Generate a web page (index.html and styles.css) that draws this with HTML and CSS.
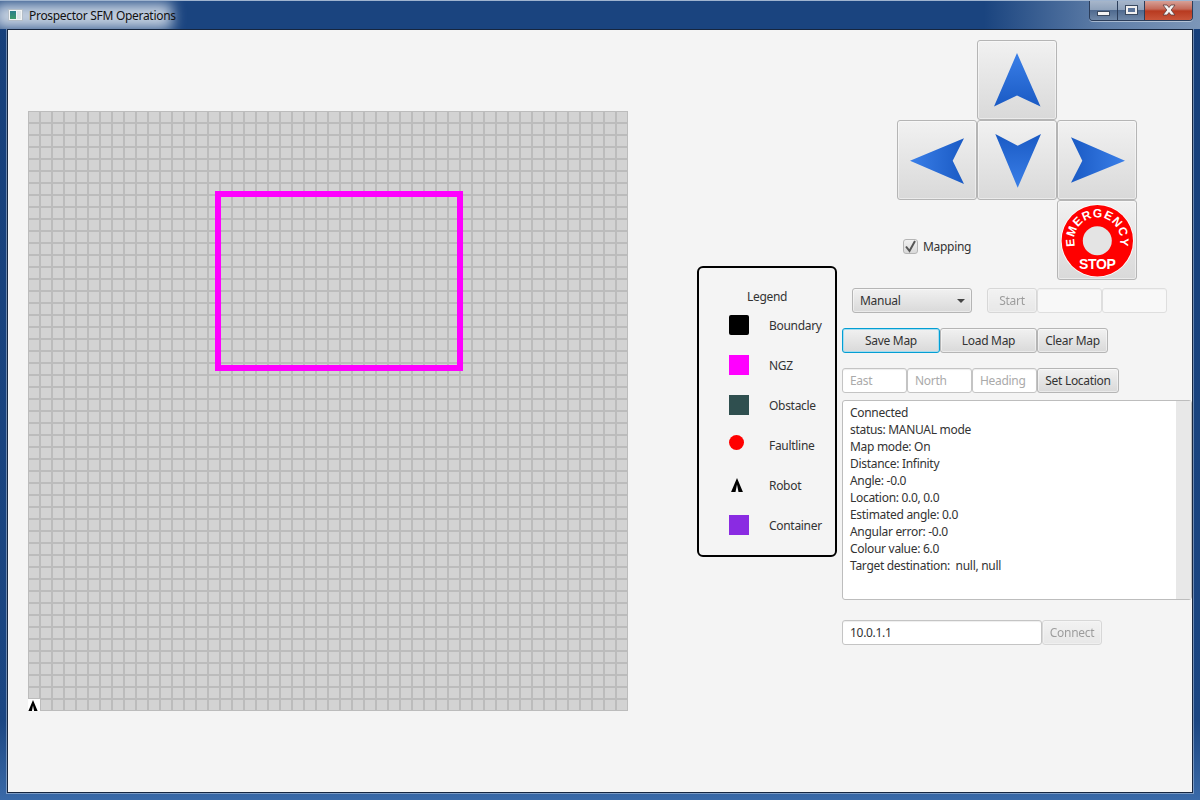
FILE: index.html
```html
<!DOCTYPE html>
<html>
<head>
  <meta charset="UTF-8">
  <title>Prospector SFM Operations</title>
  <link rel="stylesheet" href="styles.css">
</head>
<body>
  <div class="window">
    <div class="titlebar">
      <div class="title-glow"></div>
      <span class="app-icon"><i class="app-icon-green"></i><i class="app-icon-grey"></i></span>
      <span class="title-text">Prospector SFM Operations</span>
      <div class="win-controls">
        <div class="win-btn win-min"><i></i></div>
        <div class="win-btn win-max"><i></i></div>
        <div class="win-btn win-close">
          <svg width="14" height="12" viewBox="0 0 14 12"><path d="M1 1h4l2 2.500L9 1h4L9.200 6 13 11H9L7 8.500 5 11H1l3.800-5z" fill="#f4f4f4" stroke="#5a3a3a" stroke-width=".8"/></svg>
        </div>
      </div>
    </div>

    <div class="content">
      <!-- map -->
      <div class="map">
        <div class="ngz-rect"></div>
        <div class="robot">
          <svg width="10" height="12" viewBox="0 0 11 13"><path d="M5.500 0L11 13H6.900L5.500 6 4.100 13H0z" fill="#000"/></svg>
        </div>
      </div>

      <!-- legend -->
      <div class="legend">
        <div class="legend-title">Legend</div>
        <div class="legend-row"><span class="swatch swatch-boundary"></span><span>Boundary</span></div>
        <div class="legend-row"><span class="swatch swatch-ngz"></span><span>NGZ</span></div>
        <div class="legend-row"><span class="swatch swatch-obstacle"></span><span>Obstacle</span></div>
        <div class="legend-row"><span class="swatch"><i class="swatch-fault"></i></span><span>Faultline</span></div>
        <div class="legend-row">
          <span class="swatch swatch-robot">
            <svg width="12" height="14" viewBox="0 0 11 13"><path d="M5.500 0L11 13H6.900L5.500 6 4.100 13H0z" fill="#000"/></svg>
          </span>
          <span>Robot</span>
        </div>
        <div class="legend-row"><span class="swatch swatch-container"></span><span>Container</span></div>
      </div>

      <!-- controls -->
      <div class="controls">
        <div class="dpad">
          <div></div>
          <button class="btn pad-btn">
            <svg width="80" height="80" viewBox="0 0 80 80">
              <defs><linearGradient id="gUp" x1="0" y1="0" x2="0" y2="1"><stop offset="0" stop-color="#3a7fe8"/><stop offset="1" stop-color="#1a5ac4"/></linearGradient></defs>
              <polygon points="40,13 63.500,66.500 40,55.500 17,66.500" fill="url(#gUp)"/>
            </svg>
          </button>
          <div></div>
          <button class="btn pad-btn">
            <svg width="80" height="80" viewBox="0 0 80 80">
              <defs><linearGradient id="gLeft" x1="0" y1="0" x2="1" y2="0"><stop offset="0" stop-color="#3a7fe8"/><stop offset="1" stop-color="#1a5ac4"/></linearGradient></defs>
              <polygon points="13,40.700 67,18.300 55.700,40.700 67,64" fill="url(#gLeft)"/>
            </svg>
          </button>
          <button class="btn pad-btn">
            <svg width="80" height="80" viewBox="0 0 80 80">
              <defs><linearGradient id="gDown" x1="0" y1="1" x2="0" y2="0"><stop offset="0" stop-color="#3a7fe8"/><stop offset="1" stop-color="#1a5ac4"/></linearGradient></defs>
              <polygon points="40.700,67.700 18.300,14 40.700,25.700 64,14" fill="url(#gDown)"/>
            </svg>
          </button>
          <button class="btn pad-btn">
            <svg width="80" height="80" viewBox="0 0 80 80">
              <defs><linearGradient id="gRight" x1="1" y1="0" x2="0" y2="0"><stop offset="0" stop-color="#3a7fe8"/><stop offset="1" stop-color="#1a5ac4"/></linearGradient></defs>
              <polygon points="68,40.700 14,17.300 25.300,40.700 14,62.700" fill="url(#gRight)"/>
            </svg>
          </button>
          <label class="check-row">
            <span class="checkbox">
              <svg width="13" height="13" viewBox="0 0 13 13"><path d="M2 6.500L5.500 11 11 1" fill="none" stroke="#555" stroke-width="2"/></svg>
            </span>
            Mapping
          </label>
          <div></div>
          <button class="btn pad-btn">
            <svg class="estop" width="80" height="80" viewBox="0 0 80 80">
              <defs><path id="estopArc" d="M18.300 47A23 23 0 1 1 62.300 47"/></defs>
              <circle cx="40.300" cy="40.700" r="36.500" fill="#fff"/>
              <circle cx="40.300" cy="40.700" r="35.700" fill="#ff0000"/>
              <circle cx="40.300" cy="40.700" r="14.500" fill="#e4e4e4"/>
              <text class="estop-text" font-size="12" letter-spacing=".8"><textPath href="#estopArc" startOffset="50%" text-anchor="middle">EMERGENCY</textPath></text>
              <text class="estop-text" x="40.300" y="69" font-size="14" text-anchor="middle">STOP</text>
            </svg>
          </button>
        </div>

        <div class="row row-mode">
          <button class="btn mode-select"><span>Manual</span><i class="caret"></i></button>
          <button class="btn start-btn is-disabled">Start</button>
          <input class="field field-wide is-disabled" type="text">
          <input class="field field-wide is-disabled" type="text">
        </div>

        <div class="row row-map">
          <button class="btn save-btn">Save Map</button>
          <button class="btn load-btn">Load Map</button>
          <button class="btn clear-btn">Clear Map</button>
        </div>

        <div class="row row-loc">
          <input class="field field-loc" type="text" placeholder="East">
          <input class="field field-loc" type="text" placeholder="North">
          <input class="field field-loc" type="text" placeholder="Heading">
          <button class="btn setloc-btn">Set Location</button>
        </div>

        <div class="log">
          <div class="log-text">Connected
status: MANUAL mode
Map mode: On
Distance: Infinity
Angle: -0.0
Location: 0.0, 0.0
Estimated angle: 0.0
Angular error: -0.0
Colour value: 6.0
Target destination:  null, null</div>
          <div class="log-scroll"></div>
        </div>

        <div class="row row-connect">
          <input class="field field-ip" type="text" value="10.0.1.1">
          <button class="btn connect-btn is-disabled">Connect</button>
        </div>
      </div>
    </div>
  </div>
</body>
</html>
```

FILE: styles.css
```css
/* page and window frame */
html, body {
  margin: 0;
  padding: 0;
}
body {
  width: 1200px;
  height: 800px;
  overflow: hidden;
  font-family: "Noto Sans", "Open Sans", sans-serif;
  font-size: 12px;
  letter-spacing: -.3px;
  color: #333;
}
.window {
  width: 1200px;
  height: 800px;
  box-sizing: border-box;
  display: flex;
  flex-direction: column;
  background: linear-gradient(to bottom, #163f7a 0, #1b4682 90%, #3a6aa8 100%);
  overflow: hidden;
}
.titlebar {
  position: relative;
  height: 29px;
  flex: none;
  display: flex;
  align-items: center;
  padding-left: 8px;
  overflow: hidden;
  background: linear-gradient(to right, #1a447f 0, #1a447f 82%, #5f7ea8 92%, #7c96b8 100%);
  border-top: 1px solid #9fb4cf;
  box-sizing: border-box;
}
.title-glow {
  position: absolute;
  left: -6px;
  top: 2px;
  width: 178px;
  height: 26px;
  background: #c4d0e0;
  filter: blur(7px);
}
.app-icon {
  position: relative;
  width: 15px;
  height: 12px;
  display: flex;
  padding: 1px;
  box-sizing: border-box;
  background: #f2f4f5;
  border: 1px solid #b4bec8;
}
.app-icon-green {
  width: 7px;
  background: linear-gradient(to bottom, #2a7f8a, #3f9a6a);
}
.app-icon-grey {
  width: 4px;
  margin-left: 1px;
  background: #dfe5e8;
}
.title-text {
  position: relative;
  margin-left: 6px;
  color: #111;
}
.win-controls {
  position: absolute;
  top: -1px;
  right: 7px;
  display: flex;
  height: 20px;
  border: 1px solid #2b3d5a;
  border-top: none;
  border-radius: 0 0 4px 4px;
  box-shadow: 0 1px 0 rgba(255, 255, 255, .45);
  overflow: hidden;
}
.win-btn {
  height: 20px;
  display: flex;
  align-items: center;
  justify-content: center;
  background: linear-gradient(to bottom, #a9b8cc 0, #8fa2bb 48%, #4f6a8f 52%, #6f88a8 100%);
}
.win-min {
  width: 27px;
  border-right: 1px solid #2b3d5a;
}
.win-min i {
  width: 11px;
  height: 3px;
  margin-top: 7px;
  background: #f4f4f4;
  border: 1px solid #3a4a60;
}
.win-max {
  width: 26px;
  border-right: 1px solid #2b3d5a;
}
.win-max i {
  width: 7px;
  height: 4px;
  border: 2px solid #f0f0f0;
  outline: 1px solid #3a4a60;
  background: #5a7398;
}
.win-close {
  width: 47px;
  background: linear-gradient(to bottom, #d9a79e 0, #c46a5a 45%, #b83a20 55%, #c9553a 100%);
}

/* main area */
.content {
  flex: 1;
  display: flex;
  align-items: flex-start;
  margin: 0 7px 7px 7px;
  background: #f4f4f4;
  border: 1px solid #16263f;
  box-shadow: 0 0 0 1px rgba(190, 205, 225, .5);
}

/* map canvas */
.map {
  position: relative;
  flex: none;
  width: 600px;
  height: 600px;
  margin: 81px 0 0 20px;
  background-color: #d3d3d3;
  background-image:
    linear-gradient(to right, #bcbcbc 2px, transparent 2px),
    linear-gradient(to bottom, #bcbcbc 2px, transparent 2px);
  background-size: 12px 12px;
  background-position: -1px -1px;
}
.ngz-rect {
  position: absolute;
  left: 187px;
  top: 80px;
  width: 248px;
  height: 180px;
  box-sizing: border-box;
  border: 6px solid #ff00ff;
}
.robot {
  position: absolute;
  left: 0;
  bottom: 0;
  width: 12px;
  height: 12px;
  overflow: hidden;
  background: #fff;
}
.robot svg {
  display: block;
  margin-top: 1px;
}

/* legend */
.legend {
  flex: none;
  box-sizing: border-box;
  width: 140px;
  height: 291px;
  margin: 236px 0 0 69px;
  border: 2px solid #000;
  border-radius: 6px;
  padding-top: 20px;
}
.legend-title {
  height: 18px;
  line-height: 18px;
  margin-bottom: -1px;
  padding-left: 48px;
}
.legend-row {
  display: flex;
  height: 40px;
  align-items: center;
  padding-left: 30px;
}
.swatch {
  width: 20px;
  height: 20px;
  margin-right: 20px;
  flex: none;
  display: block;
}
.swatch-boundary {
  background: #000;
  border-radius: 2px;
}
.swatch-ngz {
  background: #ff00ff;
}
.swatch-obstacle {
  background: #2f4f4f;
}
.swatch-fault {
  display: block;
  width: 15px;
  height: 15px;
  border-radius: 50%;
  background: #ff0000;
}
.swatch-robot svg {
  display: block;
  margin: 3px 0 0 2px;
}
.swatch-container {
  background: #8a2be2;
}

/* right column */
.controls {
  flex: none;
  width: 350px;
  margin: 10px 0 0 5px;
}
.dpad {
  display: grid;
  grid-template-columns: repeat(3, 80px);
  grid-template-rows: repeat(3, 80px);
  margin-left: 55px;
}
.btn {
  font-family: inherit;
  font-size: 12px;
  letter-spacing: inherit;
  color: #333;
  box-sizing: border-box;
  height: 25px;
  padding: 0;
  background: linear-gradient(to bottom, #f1f1f1 0, #d9d9d9 100%);
  border: 1px solid #b5b5b5;
  border-radius: 3px;
  box-shadow: inset 0 0 0 1px rgba(255, 255, 255, .45);
}
.pad-btn {
  width: 80px;
  height: 80px;
}
.pad-btn svg {
  display: block;
  margin: -1px;
}
.estop-text {
  font-family: "Liberation Sans", sans-serif;
  font-weight: bold;
  fill: #fff;
}
.check-row {
  display: flex;
  align-items: center;
  padding: 12px 0 0 6px;
  color: #333;
}
.checkbox {
  width: 15px;
  height: 15px;
  box-sizing: border-box;
  margin-right: 5px;
  display: block;
  background: linear-gradient(to bottom, #f1f1f1, #d9d9d9);
  border: 1px solid #b5b5b5;
  border-radius: 3px;
}
.checkbox svg {
  display: block;
}

.row {
  display: flex;
  height: 25px;
}
.row-mode {
  margin: 8px 0 0 10px;
}
.row-map, .row-loc {
  margin-top: 15px;
}
.row-connect {
  margin-top: 20px;
}
.mode-select {
  width: 120px;
  display: flex;
  align-items: center;
  justify-content: space-between;
  padding: 0 6px 0 7px;
}
.caret {
  width: 0;
  height: 0;
  border-left: 4px solid transparent;
  border-right: 4px solid transparent;
  border-top: 4px solid #444;
}
.start-btn {
  width: 50px;
  margin-left: 15px;
}
.save-btn {
  width: 98px;
  border-color: #039ed3;
  box-shadow: inset 0 0 0 1px #a5dcef;
}
.load-btn {
  width: 97px;
}
.clear-btn {
  width: 71px;
}
.setloc-btn {
  width: 82px;
}
.connect-btn {
  width: 60px;
}
.is-disabled {
  opacity: .45;
}
.field {
  font-family: inherit;
  font-size: 12px;
  letter-spacing: inherit;
  color: #333;
  box-sizing: border-box;
  height: 25px;
  margin: 0;
  padding: 0 7px;
  background: #fff;
  border: 1px solid #c4c4c4;
  border-radius: 3px;
  box-shadow: inset 0 1px 1px #eee;
  outline: none;
}
.field::placeholder {
  color: #aaa;
  opacity: 1;
}
.field-wide, .field-loc {
  width: 65px;
}
.field-ip {
  width: 200px;
}

/* status log */
.log {
  display: flex;
  box-sizing: border-box;
  width: 350px;
  height: 200px;
  margin-top: 7px;
  background: #fff;
  border: 1px solid #bdbdbd;
  border-radius: 3px;
}
.log-text {
  flex: 1;
  padding: 3px 7px;
  line-height: 17px;
  white-space: pre;
}
.log-scroll {
  width: 15px;
  background: #e8e8e8;
}
```
